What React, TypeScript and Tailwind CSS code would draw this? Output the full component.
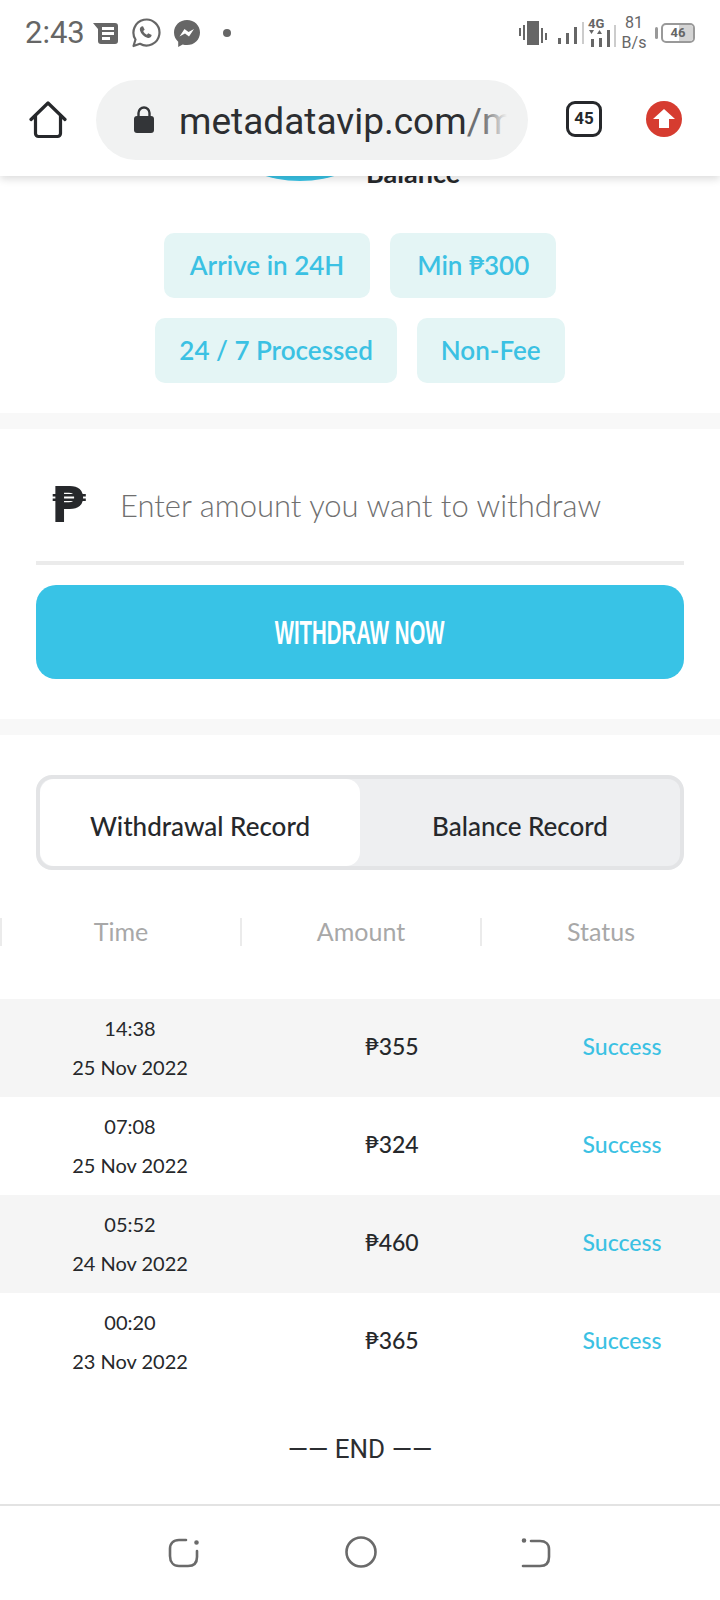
const records = [
  { time: "14:38", date: "25 Nov 2022", amount: "₱355" },
  { time: "07:08", date: "25 Nov 2022", amount: "₱324" },
  { time: "05:52", date: "24 Nov 2022", amount: "₱460" },
  { time: "00:20", date: "23 Nov 2022", amount: "₱365" },
];

function StatusLeftIcons() {
  return (
    <div className="flex items-center">
      <svg width="26" height="22" viewBox="0 0 26 22" className="ml-[8px]">
        <path d="M0 1h22a3 3 0 0 1 3 3v15a3 3 0 0 1-3 3H8a3 3 0 0 1-3-3V7z" fill="#666" />
        <path d="M9 5h12v3H9zM9 10h12v3H9zM9 15h8v3H9z" fill="#fff" />
      </svg>
      <svg width="30" height="30" viewBox="0 0 30 30" className="ml-[12px]">
        <path d="M2.5 28l2-6.5A13 13 0 1 1 9 25.8z" fill="none" stroke="#666" strokeWidth="2.2" strokeLinejoin="round" />
        <path d="M10.5 8.5c-1.5.8-2 2.3-1.500 4 1 3.300 4 6.300 7.300 7.300 1.700.5 3.200 0 4-1.500l.4-1.300-3.500-1.700-1.300 1.500c-1.700-.7-3-2-3.700-3.700l1.500-1.300-1.700-3.500z" fill="#666" />
      </svg>
      <svg width="26" height="27" viewBox="0 0 26 27" className="ml-[13px]">
        <path d="M13 0C5.800 0 0 5.400 0 12.500c0 3.700 1.600 7 4.200 9.200V27l4.500-2.500c1.400.4 2.800.6 4.300.6 7.200 0 13-5.400 13-12.600S20.200 0 13 0z" fill="#666" />
        <path d="M5.500 16.500l5-7.500 4 3 5.500-3-5 7.500-4-3z" fill="#fff" />
      </svg>
      <span className="ml-[23px] h-[8px] w-[8px] rounded-full bg-[#666]" />
    </div>
  );
}

function StatusRightIcons() {
  return (
    <div className="flex items-center">
      <svg width="28" height="26" viewBox="0 0 28 26" fill="#666">
        <path d="M8 1h12v24H8zM4 5h2v15H4zM0 8h2v8H0zM22 8h2v15h-2zM26 13h2v7h-2z" />
      </svg>
      <svg width="28" height="22" viewBox="0 0 28 22" className="ml-[11px]">
        <path d="M0 16h3v6H0zM8 11h3v11H8zM16 5h3v17h-3z" fill="#666" />
        <path d="M24 0h2v22h-2z" fill="#ccc" />
      </svg>
      <div className="relative ml-[2px] h-[28px] w-[28px]">
        <span className="absolute -top-[2px] left-0 font-['Roboto',sans-serif] text-[13px] leading-[13px] font-bold text-[#666]">4G</span>
        <svg width="28" height="28" viewBox="0 0 28 28" className="absolute top-0 left-0">
          <path d="M1 11h5l-2.500 4zM9 15h5l-2.500-4zM3 20h3v8H3zM11 19h3v9h-3zM19 11h3v17h-3z" fill="#666" />
          <path d="M26 6h2v22h-2z" fill="#ccc" />
        </svg>
      </div>
      <div className="ml-[4px] w-[28px] text-center font-['Roboto',sans-serif] text-[16px] leading-[20px] text-[#666]">
        <div>81</div>
        <div>B/s</div>
      </div>
      <div className="ml-[7px] h-[12px] w-[3px] rounded-sm bg-[#999]" />
      <div className="relative ml-[3px] flex h-[20px] w-[34px] items-center justify-center overflow-hidden rounded-[5px] border-2 border-[#999]">
        <div className="absolute inset-y-0 right-0 w-[14px] bg-[#d4d4d4]" />
        <span className="relative font-['Roboto',sans-serif] text-[13px] font-bold text-[#666]">46</span>
      </div>
    </div>
  );
}

function BrowserBar() {
  return (
    <div className="flex h-[116px] items-start pt-[20px]">
      <svg width="38" height="38" viewBox="0 0 38 38" className="mt-[21px] ml-[29px]" fill="none" stroke="#26282b" strokeWidth="3.200" strokeLinejoin="round" strokeLinecap="round">
        <path d="M2 18.500 19 2l17 16.500M6.500 15v17.500a3 3 0 0 0 3 3h19a3 3 0 0 0 3-3V15" />
      </svg>
      <div className="ml-[29px] flex h-[80px] w-[432px] items-center overflow-hidden rounded-[40px] bg-[#f1f2f2]">
        <svg width="22" height="28" viewBox="0 0 22 28" className="ml-[37px] shrink-0">
          <path d="M5.500 11V7a5.500 5.500 0 0 1 11 0v4" fill="none" stroke="#333538" strokeWidth="2.400" />
          <rect x="1" y="10" width="20" height="17" rx="3" fill="#333538" />
        </svg>
        <div className="relative mt-[3px] ml-[24px] w-[328px] overflow-hidden font-['Roboto',sans-serif] text-[37px] whitespace-nowrap text-[#2c2e31]">
          metadatavip.com<span className="text-[#6e7072]">/m</span>
          <div className="absolute inset-y-0 right-0 w-[24px] bg-gradient-to-r from-transparent to-[#f1f2f2]" />
        </div>
      </div>
      <div className="mt-[21px] ml-[38px] flex h-[36px] w-[36px] items-center justify-center rounded-[9px] border-[3.500px] border-[#26282b] font-['Roboto',sans-serif] text-[17px] font-bold text-[#26282b]">
        45
      </div>
      <div className="mt-[21px] ml-[44px] flex h-[36px] w-[36px] items-center justify-center rounded-full bg-[#d63c30]">
        <svg width="22" height="20" viewBox="0 0 22 20">
          <path d="M11 0l11 10h-6v9H6v-9H0z" fill="#fff" />
        </svg>
      </div>
    </div>
  );
}

function Chip({ label, padding = "px-[24px]" }: { label: string; padding?: string }) {
  return (
    <div className={`flex h-[65px] items-center rounded-[10px] bg-[#e4f5f5] text-[26px] font-semibold text-[#3bc1e3] ${padding}`}>
      {label}
    </div>
  );
}

function NavIcons() {
  return (
    <div className="flex h-[95px] items-start justify-between border-t-2 border-[#e3e3e3] pt-[32px] pr-[169px] pl-[168px]">
      <svg width="32" height="30" viewBox="0 0 32 30" fill="none" stroke="#6a6a6a" strokeWidth="2.600" strokeLinecap="round">
        <path d="M18 2H11C5.500 2 2 5.500 2 11v7c0 6 3.500 10 9 10h9c6 0 9-3 9-9v-6" />
        <circle cx="28.500" cy="4.500" r="1" fill="#6a6a6a" />
      </svg>
      <svg width="32" height="32" viewBox="0 0 32 32" className="-mt-[2px]" fill="none" stroke="#6a6a6a" strokeWidth="2.600">
        <circle cx="16" cy="16" r="14.500" />
      </svg>
      <svg width="30" height="30" viewBox="0 0 30 30" fill="none" stroke="#6a6a6a" strokeWidth="2.600" strokeLinecap="round">
        <path d="M10 3h9c5.500 0 9 3 9 8v8c0 6-3.500 9-9 9H2" />
        <circle cx="3" cy="2.500" r="1" fill="#6a6a6a" />
      </svg>
    </div>
  );
}

export default function App() {
  return (
    <div className="flex h-[1600px] w-[720px] flex-col overflow-hidden bg-white font-['Lato',sans-serif] text-[#26282b]">
      <header className="relative z-10 bg-white shadow-[0_3px_8px_rgba(0,0,0,0.14)]">
        <div className="flex h-[60px] items-center justify-between pt-[6px] pr-[25px] pl-[25px]">
          <div className="flex items-center">
            <span className="font-['Roboto',sans-serif] text-[31px] text-[#666]">2:43</span>
            <StatusLeftIcons />
          </div>
          <StatusRightIcons />
        </div>
        <BrowserBar />
      </header>

      <div className="flex h-[57px] shrink-0 overflow-hidden">
        <div className="-mt-[235px] ml-[180px] h-[240px] w-[240px] shrink-0 rounded-full bg-[#38c3e6]" />
        <div className="-mt-[17px] -ml-[54px] text-[27px] leading-[27px] font-bold whitespace-nowrap">Balance</div>
      </div>

      <section className="flex flex-col items-center gap-[20px] pb-[30px]">
        <div className="flex gap-[20px]">
          <Chip label="Arrive in 24H" padding="px-[26px]" />
          <Chip label="Min ₱300" padding="px-[27px]" />
        </div>
        <div className="flex gap-[20px]">
          <Chip label="24 / 7 Processed" />
          <Chip label="Non-Fee" />
        </div>
      </section>

      <div className="h-[16px] shrink-0 bg-[#f8f8f8]" />

      <section className="px-[36px] pb-[40px]">
        <div className="flex h-[136px] items-center border-b-4 border-[#ebebeb] pt-[20px]">
          <span className="ml-[15px] w-[69px] font-['DejaVu_Sans',sans-serif] text-[50px] leading-none font-bold">₱</span>
          <input
            readOnly
            placeholder="Enter amount you want to withdraw"
            className="min-w-0 flex-1 bg-transparent text-[31px] font-light outline-none placeholder:text-[#6f6f6f]"
          />
        </div>
        <button className="mt-[20px] flex h-[94px] w-full items-center justify-center rounded-[20px] bg-[#38c3e6]">
          <span className="scale-x-[0.6] font-['Liberation_Sans',sans-serif] text-[34px] font-bold whitespace-nowrap text-white">
            WITHDRAW NOW
          </span>
        </button>
      </section>

      <div className="h-[16px] shrink-0 bg-[#f8f8f8]" />

      <section className="px-[36px] pt-[40px]">
        <div className="flex h-[95px] rounded-[16px] border-4 border-[#e3e4e6] bg-[#eeeff1]">
          <div className="flex w-[320px] items-center justify-center rounded-[14px] bg-white pt-[7px] text-[26px] font-medium">
            Withdrawal Record
          </div>
          <div className="flex flex-1 items-center justify-center pt-[7px] text-[26px] font-medium">Balance Record</div>
        </div>
      </section>

      <div className="mt-[48px] grid grid-cols-3 text-[25px] text-[#a8a8a8]">
        {["Time", "Amount", "Status"].map((label) => (
          <div key={label} className="flex h-[28px] items-center justify-center border-l-2 border-[#ebebeb]">
            {label}
          </div>
        ))}
      </div>

      <div className="mt-[53px]">
        {records.map((row) => (
          <div
            key={row.time}
            className="grid h-[98px] grid-cols-[260px_264px_196px] items-center text-center odd:bg-[#f5f5f5]"
          >
            <div className="text-[20px] leading-[39px]">
              <div>{row.time}</div>
              <div>{row.date}</div>
            </div>
            <div className="pb-[3px] text-[23px] font-medium">{row.amount}</div>
            <div className="pb-[3px] text-[23px] font-medium text-[#3bc1e3]">Success</div>
          </div>
        ))}
      </div>

      <div className="flex h-[113px] shrink-0 items-center justify-center pt-[4px] font-['Roboto',sans-serif] text-[26px] text-[#2c2e31]">
        —— END ——
      </div>

      <NavIcons />
    </div>
  );
}
